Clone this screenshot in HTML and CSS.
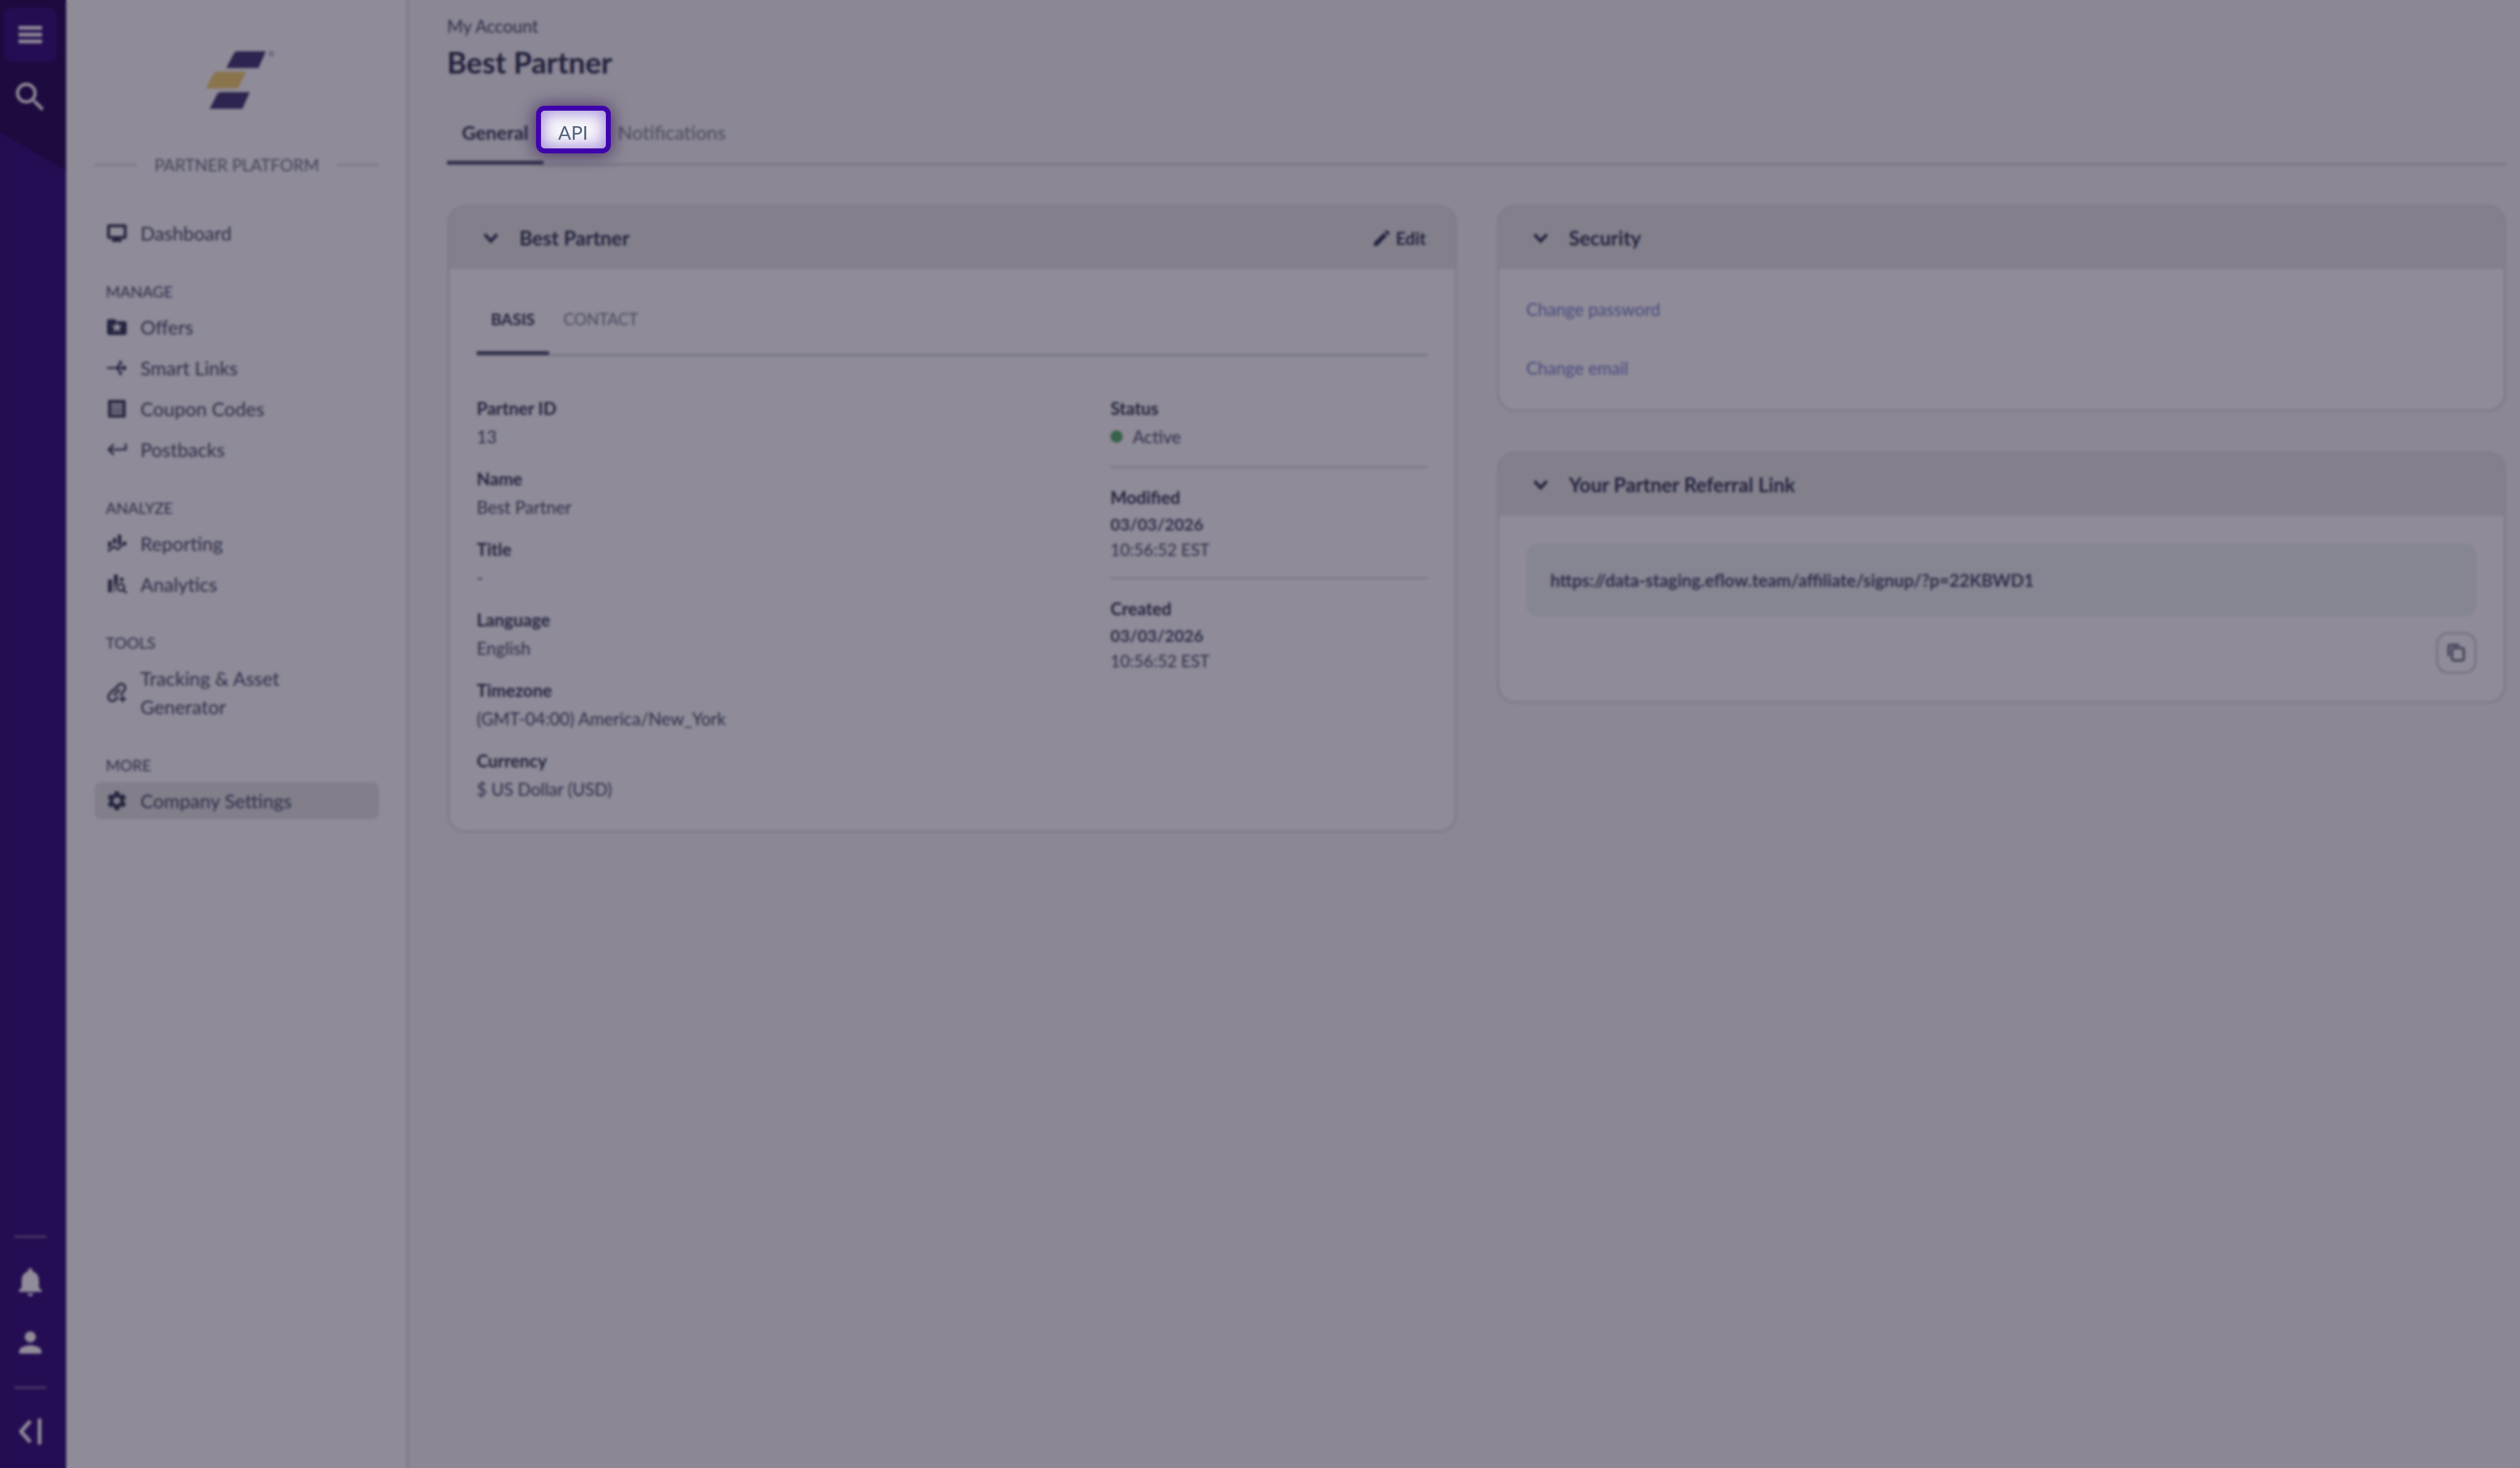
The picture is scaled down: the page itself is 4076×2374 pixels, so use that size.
FILE: index.html
```html
<!DOCTYPE html>
<html lang="en">
<head>
  <meta charset="UTF-8" />
  <meta name="viewport" content="width=device-width, initial-scale=1.0"/>
  <title>My Account - Best Partner</title>
  <link rel="stylesheet" href="styles.css">
</head>
<body>
  <div class="app">
    <div class="rail">
      <div class="rail-group">
        <button class="rail-btn active" aria-label="Menu">
          <svg width="38" height="28" viewBox="0 0 38 28"><path d="M0 0h38v6H0zM0 11h38v6H0zM0 22h38v6H0z"/></svg>
        </button>
        <button class="rail-btn rail-search" aria-label="Search">
          <svg width="62" height="62" viewBox="0 0 24 24"><path d="M15.5 14h-.79l-.28-.27A6.47 6.47 0 0 0 16 9.5 6.5 6.5 0 1 0 9.500 16c1.610 0 3.090-.59 4.230-1.570l.27.28v.79l5 4.990L20.490 19l-4.990-5zm-6 0C7.010 14 5 11.990 5 9.500S7.010 5 9.500 5 14 7.010 14 9.500 11.990 14 9.500 14z"/></svg>
        </button>
      </div>
      <div class="rail-group">
        <hr class="rail-line">
        <button class="rail-btn" aria-label="Alerts">
          <svg width="56" height="56" viewBox="0 0 24 24"><path d="M12 22c1.100 0 2-.9 2-2h-4a2 2 0 0 0 2 2zm6-6v-5c0-3.070-1.640-5.640-4.500-6.320V4c0-.83-.67-1.500-1.500-1.500s-1.500.67-1.500 1.500v.68C7.630 5.360 6 7.920 6 11v5l-2 2v1h16v-1l-2-2z"/></svg>
        </button>
        <button class="rail-btn" aria-label="Profile">
          <svg width="54" height="54" viewBox="0 0 24 24"><path d="M12 12a4 4 0 1 0 0-8 4 4 0 0 0 0 8zm0 2c-2.670 0-8 1.340-8 4v2h16v-2c0-2.660-5.330-4-8-4z"/></svg>
        </button>
        <hr class="rail-line">
        <button class="rail-btn rail-collapse" aria-label="Collapse sidebar">
          <svg width="36" height="42" viewBox="0 0 36 42"><path d="M18 4 3 21l15 17" fill="none" stroke="#918c99" stroke-width="6"/><path d="M30 0h6v42h-6z"/></svg>
        </button>
      </div>
    </div>

    <aside class="sidebar">
      <div class="logo">
        <svg width="114" height="96" viewBox="0 0 114 96">
          <path class="logo-dark" d="M51 1h46L85 28H33l12-23q2-4 6-4z"/>
          <path class="logo-gold" d="M18 34h47L52 61H0l12-23q2-4 6-4z"/>
          <path class="logo-dark" d="M24 67h47L59 94H6l12-23q2-4 6-4z"/>
          <circle cx="106" cy="5" r="3" fill="none" stroke="#5b5673" stroke-width="2"/>
        </svg>
      </div>
      <div class="platform"><span>PARTNER PLATFORM</span></div>

      <nav>
        <div class="nav-group">
          <a href="#" class="nav-item">
            <svg viewBox="0 0 24 24"><path d="M20 3H4a2 2 0 0 0-2 2v11c0 1.100.9 2 2 2h4l-1 1v2h10v-2l-1-1h4a2 2 0 0 0 2-2V5a2 2 0 0 0-2-2zm-1 12H5V6h14z"/></svg>
            Dashboard</a>
        </div>
        <div class="nav-group">
          <h2>MANAGE</h2>
          <a href="#" class="nav-item">
            <svg viewBox="0 0 24 24"><path fill-rule="evenodd" d="M20 6h-8l-2-2H4a2 2 0 0 0-2 2v12c0 1.100.9 2 2 2h16a2 2 0 0 0 2-2V8a2 2 0 0 0-2-2zm-4.500 11L12 14.700 8.500 17l1-4L6.500 10.500l4-.3L12 6.800l1.500 3.400 4 .3-3 2.500z"/></svg>
            Offers</a>
          <a href="#" class="nav-item">
            <svg viewBox="0 0 24 24"><path d="M2 12h18M11 12c3 0 3-5 5-5M11 12c3 0 3 5 5 5" fill="none" stroke="#25243f" stroke-width="2"/><path d="m18 8.500 4.500 3.500-4.500 3.500zM14 4.500l4 1-2.500 4zM14 19.500l4-1-2.500-4z"/></svg>
            Smart Links</a>
          <a href="#" class="nav-item">
            <svg viewBox="0 0 24 24"><path fill-rule="evenodd" d="M4 3h16a1 1 0 0 1 1 1v16a1 1 0 0 1-1 1H4a1 1 0 0 1-1-1V4a1 1 0 0 1 1-1zm2 3.500v1.800h12V6.500zm0 3.200v1.800h12V9.700zm0 3.200v1.800h12v-1.800zm0 3.200v1.800h12v-1.800z"/></svg>
            Coupon Codes</a>
          <a href="#" class="nav-item">
            <svg viewBox="0 0 24 24"><path d="M20 6v5H6l3.600-3.600L8.200 6l-6 6 6 6 1.400-1.400L6 13h16V6z"/></svg>
            Postbacks</a>
        </div>
        <div class="nav-group">
          <h2>ANALYZE</h2>
          <a href="#" class="nav-item">
            <svg viewBox="0 0 24 24"><path d="M3 10h3.500v4L3 17zM8 6.500h3.500v6L10 11.500l-2 1.500zM13 3h3.500v9L13 14.500z"/><path d="m3 20 6-5 4 3 6-6" fill="none" stroke="#25243f" stroke-width="2"/><circle cx="20" cy="12" r="2"/></svg>
            Reporting</a>
          <a href="#" class="nav-item">
            <svg viewBox="0 0 24 24"><path d="M3 7h4v13H3zM9 2h4v8l-3 4v6H9z"/><circle cx="17" cy="7" r="2"/><circle cx="16" cy="15" r="3.500" fill="none" stroke="#25243f" stroke-width="2"/><path d="m18 17 4 4" stroke="#25243f" stroke-width="2"/></svg>
            Analytics</a>
        </div>
        <div class="nav-group">
          <h2>TOOLS</h2>
          <a href="#" class="nav-item">
            <svg viewBox="0 0 24 24"><g fill="none" stroke="#25243f" stroke-width="2.200" stroke-linecap="round"><path d="M9 9.500l4.500-5a4 4 0 0 1 6 5.500l-3.500 4"/><path d="M8 9.500l-3.700 4.300a4 4 0 0 0 6 5.500l2.200-2.300"/><path d="M9.500 14.500l5-5.500"/></g><path d="m18 14 1.300 3.200L22.500 18.500l-3.200 1.300L18 23l-1.300-3.200-3.200-1.300 3.200-1.300z"/></svg>
            <span>Tracking &amp; Asset Generator</span></a>
        </div>
        <div class="nav-group">
          <h2>MORE</h2>
          <a href="#" class="nav-item active">
            <svg viewBox="0 0 24 24"><path d="M19.140 12.940a7 7 0 0 0 0-1.880l2.030-1.580a.5.5 0 0 0 .12-.61l-1.920-3.320a.5.5 0 0 0-.59-.22l-2.390.96a7 7 0 0 0-1.620-.94l-.36-2.540a.5.5 0 0 0-.48-.41h-3.840a.5.5 0 0 0-.47.41l-.36 2.540a7.300 7.300 0 0 0-1.620.94l-2.390-.96a.5.5 0 0 0-.59.22L2.740 8.870a.5.5 0 0 0 .12.61l2.030 1.580a7 7 0 0 0 0 1.880l-2.030 1.580a.5.5 0 0 0-.12.61l1.920 3.320c.12.22.37.29.59.22l2.390-.96c.5.38 1.030.7 1.620.94l.36 2.540c.05.24.24.41.48.41h3.840c.24 0 .44-.17.47-.41l.36-2.540a7 7 0 0 0 1.620-.94l2.390.96c.22.08.47 0 .59-.22l1.920-3.320a.5.5 0 0 0-.12-.61zM12 15.600a3.600 3.600 0 1 1 0-7.200 3.600 3.600 0 0 1 0 7.200z"/></svg>
            Company Settings</a>
        </div>
      </nav>
    </aside>

    <main class="main">
      <div class="crumb">My Account</div>
      <h1>Best Partner</h1>
      <div class="tabs">
        <button class="tab active">General</button>
        <button class="tab spotlight">API</button>
        <button class="tab">Notifications</button>
      </div>

      <div class="columns">
        <section class="card">
          <header class="card-head">
            <svg class="chevron" width="26" height="18" viewBox="0 0 26 18"><path d="m3 3 10 11L23 3"/></svg>
            <h3>Best Partner</h3>
            <button class="edit">
              <svg width="34" height="34" viewBox="0 0 24 24"><path d="M3 17.250V21h3.750L17.810 9.940l-3.750-3.750zM20.710 7.040a1 1 0 0 0 0-1.410l-2.340-2.340a1 1 0 0 0-1.410 0l-1.830 1.830 3.750 3.750z"/></svg>
              Edit</button>
          </header>
          <div class="card-body">
            <div class="tabs small">
              <button class="tab active">BASIS</button>
              <button class="tab">CONTACT</button>
            </div>
            <div class="details">
              <dl class="fields">
                <div><dt>Partner ID</dt><dd>13</dd></div>
                <div><dt>Name</dt><dd>Best Partner</dd></div>
                <div><dt>Title</dt><dd>-</dd></div>
                <div><dt>Language</dt><dd>English</dd></div>
                <div><dt>Timezone</dt><dd>(GMT-04:00) America/New_York</dd></div>
                <div><dt>Currency</dt><dd>$ US Dollar (USD)</dd></div>
              </dl>
              <dl class="meta">
                <div><dt>Status</dt><dd class="status">Active</dd></div>
                <div><dt>Modified</dt><dd class="stamp"><b>03/03/2026</b>10:56:52 EST</dd></div>
                <div><dt>Created</dt><dd class="stamp"><b>03/03/2026</b>10:56:52 EST</dd></div>
              </dl>
            </div>
          </div>
        </section>

        <div class="stack">
          <section class="card">
            <header class="card-head">
              <svg class="chevron" width="26" height="18" viewBox="0 0 26 18"><path d="m3 3 10 11L23 3"/></svg>
              <h3>Security</h3>
            </header>
            <div class="card-body links">
              <a href="#">Change password</a>
              <a href="#">Change email</a>
            </div>
          </section>

          <section class="card">
            <header class="card-head">
              <svg class="chevron" width="26" height="18" viewBox="0 0 26 18"><path d="m3 3 10 11L23 3"/></svg>
              <h3>Your Partner Referral Link</h3>
            </header>
            <div class="card-body referral">
              <div class="url">https://data-staging.eflow.team/affiliate/signup/?p=22KBWD1</div>
              <button class="copy" aria-label="Copy link">
                <svg width="30" height="30" viewBox="0 0 30 30"><rect x="8" y="7" width="19" height="20" rx="3"/><path d="M2.500 20V5q0-3 3-3H20"/></svg>
              </button>
            </div>
          </section>
        </div>
      </div>
    </main>
  </div>

  <!-- softens everything except the spotlighted tab -->
  <div class="overlay"></div>
</body>
</html>
```

FILE: styles.css
```css
* {
  box-sizing: border-box;
}

body {
  margin: 0;
  font-family: Lato, "Open Sans", sans-serif;
  font-size: 28px;
  line-height: 46px;
  color: #2f2e4a;
  background-color: #8b8794;
}

h1, h2, h3, dl, dd {
  margin: 0;
}

button {
  padding: 0;
  border: none;
  background: none;
  font: inherit;
  color: inherit;
  cursor: pointer;
}

a {
  color: inherit;
  text-decoration: none;
}

.app {
  display: flex;
  min-height: 100vh;
}

/* purple rail */
.rail {
  display: flex;
  flex-direction: column;
  justify-content: space-between;
  flex: none;
  width: 107px;
  padding: 12px 15px 12px 6px;
  background: linear-gradient(30deg, #240d52 50%, #1d0a3f 50%) 0 0 / 107px 490px no-repeat #240d52;
}

.rail-group {
  display: flex;
  flex-direction: column;
}

.rail-btn {
  display: flex;
  align-items: center;
  justify-content: center;
  height: 98px;
  fill: #918c99;
}

.rail-btn.active {
  height: 88px;
  border-radius: 14px;
  background-color: #240d52;
}

.rail-search {
  height: 114px;
}

.rail-collapse {
  height: 94px;
}

.rail-line {
  width: 52px;
  height: 4px;
  margin: 22px auto;
  border: none;
  background-color: #483663;
}

/* sidebar */
.sidebar {
  flex: none;
  width: 555px;
  padding: 82px 44px 40px 46px;
  border-right: 5px solid #817e8a;
  background-color: #8f8b98;
}

.logo {
  display: flex;
  padding-left: 180px;
}

.logo-dark {
  fill: #2d244f;
}

.logo-gold {
  fill: #8a744c;
}

.platform {
  display: flex;
  align-items: center;
  gap: 28px;
  margin: 66px 0 57px;
  font-size: 27px;
  color: #45435a;
  white-space: nowrap;
}

.platform::before,
.platform::after {
  content: "";
  flex: 1;
  height: 4px;
  background-color: #807d8a;
}

.nav-group {
  display: flex;
  flex-direction: column;
  gap: 6px;
  margin-top: 46px;
}

.nav-group h2 {
  margin-bottom: 4px;
  padding-left: 18px;
  font-size: 25px;
  font-weight: 400;
  line-height: 36px;
}

.nav-item {
  display: flex;
  align-items: center;
  gap: 19px;
  min-height: 60px;
  padding: 7px 60px 7px 17px;
  border-radius: 10px;
  font-size: 31px;
}

.nav-item.active {
  background-color: #827f8b;
}

.nav-item svg {
  flex: none;
  width: 38px;
  height: 38px;
  fill: #25243f;
}

/* content */
.main {
  flex: 1;
  padding: 19px 22px 40px 61px;
}

h1 {
  margin-top: 6px;
  font-size: 48px;
  line-height: 60px;
  color: #22213d;
}

.tabs {
  display: flex;
  margin-top: 33px;
  border-bottom: 4px solid #7b7885;
}

.tab {
  position: relative;
  height: 100px;
  padding: 0 24px;
  font-size: 31px;
  color: #4d4b61;
}

.tab.active {
  color: #25243f;
  font-weight: 700;
}

.tab.active::after {
  content: "";
  position: absolute;
  left: 0;
  right: 0;
  bottom: -2px;
  height: 6px;
  background-color: #2f2e4a;
}

.tabs.small {
  margin: 0 0 61px;
}

.small .tab {
  height: 97px;
  padding: 0 23px 16px;
  font-size: 26px;
}

.columns {
  display: grid;
  grid-template-columns: 1fr 1fr;
  align-items: start;
  gap: 64px;
  margin-top: 63px;
}

.stack {
  display: grid;
  gap: 64px;
}

.card {
  overflow: hidden;
  border: 4px solid #807d89;
  border-radius: 30px;
  background-color: #8f8b98;
}

.card-head {
  display: flex;
  align-items: center;
  height: 100px;
  padding: 0 46px 0 54px;
  background-color: #83808c;
}

.card-head h3 {
  flex: 1;
  margin-left: 33px;
  font-size: 32px;
  color: #25243f;
}

.chevron path {
  fill: none;
  stroke: #25243f;
  stroke-width: 5;
}

.edit {
  display: flex;
  align-items: center;
  gap: 5px;
  font-weight: 700;
  color: #22213d;
  fill: #22213d;
}

.card-body {
  padding: 40px 44px 44px;
}

.details {
  display: grid;
  grid-template-columns: 2fr 1fr;
}

.fields {
  display: grid;
  gap: 22px;
}

dt {
  font-weight: 700;
  color: #25243f;
}

.meta > div + div {
  margin-top: 24px;
  padding-top: 24px;
  border-top: 4px solid #807d89;
}

.status {
  display: flex;
  align-items: center;
  gap: 16px;
}

.status::before {
  content: "";
  width: 20px;
  height: 20px;
  border-radius: 50%;
  background-color: #37624a;
}

.stamp {
  font-size: 27px;
  line-height: 41px;
}

.stamp b {
  display: block;
}

.links {
  display: flex;
  flex-direction: column;
  align-items: flex-start;
  gap: 49px;
  padding-top: 42px;
  color: #474a80;
}

.referral {
  display: flex;
  flex-direction: column;
  align-items: flex-end;
  gap: 25px;
  padding-top: 45px;
}

.url {
  align-self: stretch;
  padding: 36px 39px;
  border-radius: 20px;
  background-color: #868592;
  font-weight: 700;
}

.copy {
  display: flex;
  align-items: center;
  justify-content: center;
  width: 66px;
  height: 68px;
  border: 4px solid #7a7784;
  border-radius: 20px;
}

.copy svg {
  fill: none;
  stroke: #45435a;
  stroke-width: 4;
}

/* walkthrough overlay */
.overlay {
  position: fixed;
  inset: 0;
  z-index: 1;
  backdrop-filter: blur(2px);
  pointer-events: none;
}

.tab.spotlight {
  z-index: 2;
  color: #53627c;
}

.spotlight::before {
  content: "";
  position: absolute;
  inset: 7px -13px 16px -12px;
  z-index: -1;
  border: 8px solid #4004ad;
  border-radius: 14px;
  background-color: #f8f8fa;
  box-shadow: 0 0 28px rgba(64, 20, 110, 0.6), 0 4px 24px rgba(60, 55, 65, 0.4), inset 0 0 24px 4px rgba(88, 40, 190, 0.5);
}
```
